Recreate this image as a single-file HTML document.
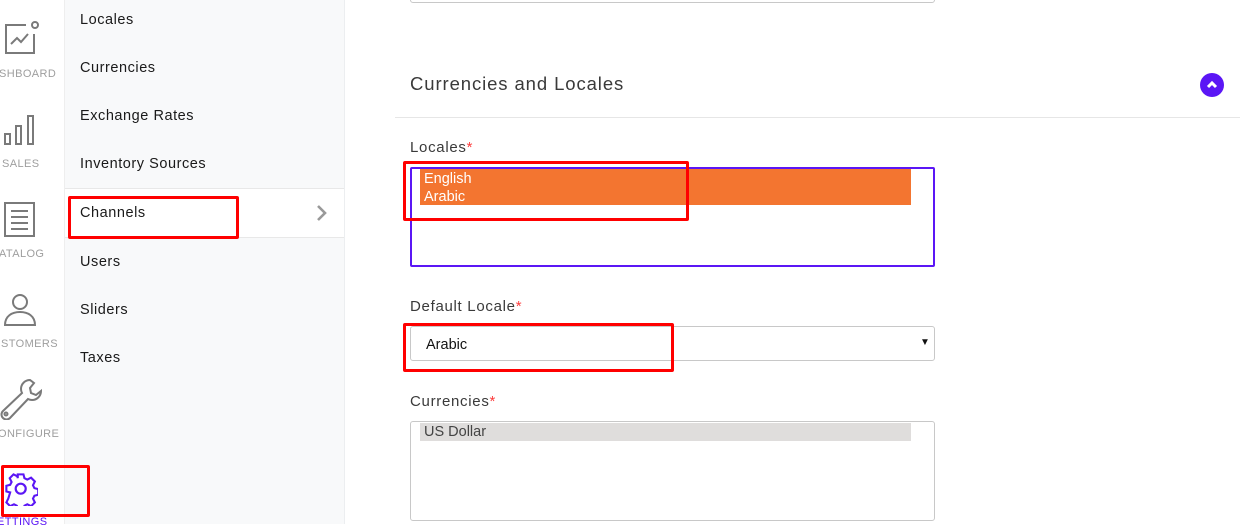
<!DOCTYPE html>
<html><head><meta charset="utf-8"><style>
*{box-sizing:border-box;margin:0;padding:0}
body{width:1257px;height:524px;overflow:hidden;background:#fff;font-family:"Liberation Sans",sans-serif;position:relative}
.abs{position:absolute}
.nav{left:0;top:0;width:65px;height:524px;background:#fff;border-right:1px solid #eee}
.lbl{font-size:11px;color:#9e9e9e;letter-spacing:.4px;white-space:nowrap}
.menu{left:65px;top:0;width:280px;height:524px;background:#f8f9fa;border-right:1px solid #eceef0}
.mi{position:absolute;left:15px;font-size:14.5px;color:#1a1a1a;letter-spacing:.55px}
.red{position:absolute;border:3px solid #f00;border-radius:2px;z-index:10}
.h{font-size:18.5px;color:#3a3a3a;letter-spacing:.9px}
.fl{font-size:15px;color:#3a3a3a;letter-spacing:.7px}
.fl b{color:#fc3c3c;font-weight:normal}
</style></head><body>
<div class="abs nav">
<svg class="abs" style="left:4px;top:20px" width="36" height="36" viewBox="0 0 36 36" fill="none" stroke="#7a7a7a" stroke-width="2"><path d="M22 5H2v28h28V14"/><circle cx="31" cy="5" r="3"/><path d="M7 24l6-6 4 4 7-8"/></svg>
<div class="abs lbl" style="left:-1px;top:68px">SHBOARD</div>
<svg class="abs" style="left:4px;top:114px" width="32" height="32" viewBox="0 0 32 32" fill="none" stroke="#7a7a7a" stroke-width="2"><rect x="1" y="20" width="5" height="10"/><rect x="12" y="12" width="5" height="18"/><rect x="24" y="2" width="5" height="28"/></svg>
<div class="abs lbl" style="left:2px;top:158px">SALES</div>
<svg class="abs" style="left:4px;top:202px" width="32" height="36" viewBox="0 0 32 36" fill="none" stroke="#7a7a7a" stroke-width="2"><rect x="1" y="1" width="29" height="33"/><path d="M7 9h17M7 15h17M7 21h17M7 27h17"/></svg>
<div class="abs lbl" style="left:-1px;top:248px">ATALOG</div>
<svg class="abs" style="left:3px;top:292px" width="34" height="34" viewBox="0 0 34 34" fill="none" stroke="#7a7a7a" stroke-width="2"><circle cx="17" cy="10" r="7"/><path d="M2 33c0-9 7-13 15-13s15 4 15 13z"/></svg>
<div class="abs lbl" style="left:1px;top:338px">STOMERS</div>
<svg class="abs" style="left:0px;top:378px" width="44" height="42" viewBox="0 0 44 42" fill="none" stroke="#7a7a7a" stroke-width="2"><path d="M30 2c-5 0-9 4-9 9 0 2 .5 3 1 4L3 33c-2 2-2 5 0 7s5 2 7 0l18-19c1 .5 2 1 4 1 5 0 9-4 9-9l-5 4-5-2-1-5 4-5z"/><circle cx="6" cy="36" r="1.5"/></svg>
<div class="abs lbl" style="left:-2px;top:428px">ONFIGURE</div>
<svg class="abs" style="left:4px;top:472px" width="34" height="34" viewBox="0 0 34 34" fill="none" stroke="#5b16f5" stroke-width="2.2"><path d="M14 2h6l1 4 3 1.5 4-2 4 4-2 4 1.5 3 4 1v6l-4 1-1.5 3 2 4-4 4-4-2-3 1.5-1 4h-6l-1-4-3-1.5-4 2-4-4 2-4L6 21l-4-1v-6l4-1 1.5-3-2-4 4-4 4 2L14 6z" transform="scale(.95) translate(0.5,0.5)"/><circle cx="16.7" cy="16.7" r="5"/></svg>
<div class="abs lbl" style="left:-3px;top:516px;color:#5b16f5">ETTINGS</div>
</div>
<div class="red" style="left:1px;top:465px;width:89px;height:52px"></div>
<div class="abs menu">
<div class="mi" style="top:12px">Locales</div>
<div class="mi" style="top:60px">Currencies</div>
<div class="mi" style="top:108px">Exchange Rates</div>
<div class="mi" style="top:156px">Inventory Sources</div>
<div class="abs" style="left:0;top:188px;width:279px;height:50px;background:#fff;border-top:1px solid #e8e8e8;border-bottom:1px solid #e8e8e8"></div>
<div class="mi" style="top:205px">Channels</div>
<svg class="abs" style="left:250px;top:204px" width="14" height="18" viewBox="0 0 14 18" fill="none" stroke="#999" stroke-width="2.6"><path d="M3 2l7 7-7 7"/></svg>
<div class="mi" style="top:254px">Users</div>
<div class="mi" style="top:302px">Sliders</div>
<div class="mi" style="top:350px">Taxes</div>
</div>
<div class="red" style="left:68px;top:196px;width:171px;height:43px"></div>
<div class="abs" style="left:410px;top:-6px;width:525px;height:9px;border:1.5px solid #c8c8c8;border-radius:3px"></div>
<div class="abs h" style="left:410px;top:73px">Currencies and Locales</div>
<div class="abs" style="left:1200px;top:73px;width:24px;height:24px;border-radius:50%;background:#5b16f5"></div>
<svg class="abs" style="left:1205px;top:79px" width="14" height="12" viewBox="0 0 14 12" fill="none" stroke="#fff" stroke-width="3"><path d="M3 8l4-4 4 4"/></svg>
<div class="abs" style="left:395px;top:117px;width:845px;height:1px;background:#e6e6e6"></div>
<div class="abs fl" style="left:410px;top:139px">Locales<b>*</b></div>
<div class="abs" style="left:410px;top:167px;width:525px;height:100px;border:2px solid #5b16f5;border-radius:2px"></div>
<div class="abs" style="left:420px;top:169px;width:491px;height:36px;background:#f37530"></div>
<div class="abs" style="left:424px;top:170px;font-size:14.5px;color:#fff;line-height:18px">English<br>Arabic</div>
<div class="red" style="left:403px;top:161px;width:286px;height:60px"></div>
<div class="abs fl" style="left:410px;top:298px">Default Locale<b>*</b></div>
<div class="abs" style="left:410px;top:326px;width:525px;height:35px;border:1.5px solid #c8c8c8;border-radius:3px"></div>
<div class="abs" style="left:426px;top:337px;font-size:14.5px;color:#111">Arabic</div>
<div class="abs" style="left:920px;top:337px;font-size:10px;color:#111">▼</div>
<div class="red" style="left:403px;top:323px;width:271px;height:49px"></div>
<div class="abs fl" style="left:410px;top:393px">Currencies<b>*</b></div>
<div class="abs" style="left:410px;top:421px;width:525px;height:100px;border:1.5px solid #c8c8c8;border-radius:3px"></div>
<div class="abs" style="left:420px;top:423px;width:491px;height:18px;background:#dfdddc"></div>
<div class="abs" style="left:424px;top:424px;font-size:14.5px;color:#444">US Dollar</div>
</body></html>
